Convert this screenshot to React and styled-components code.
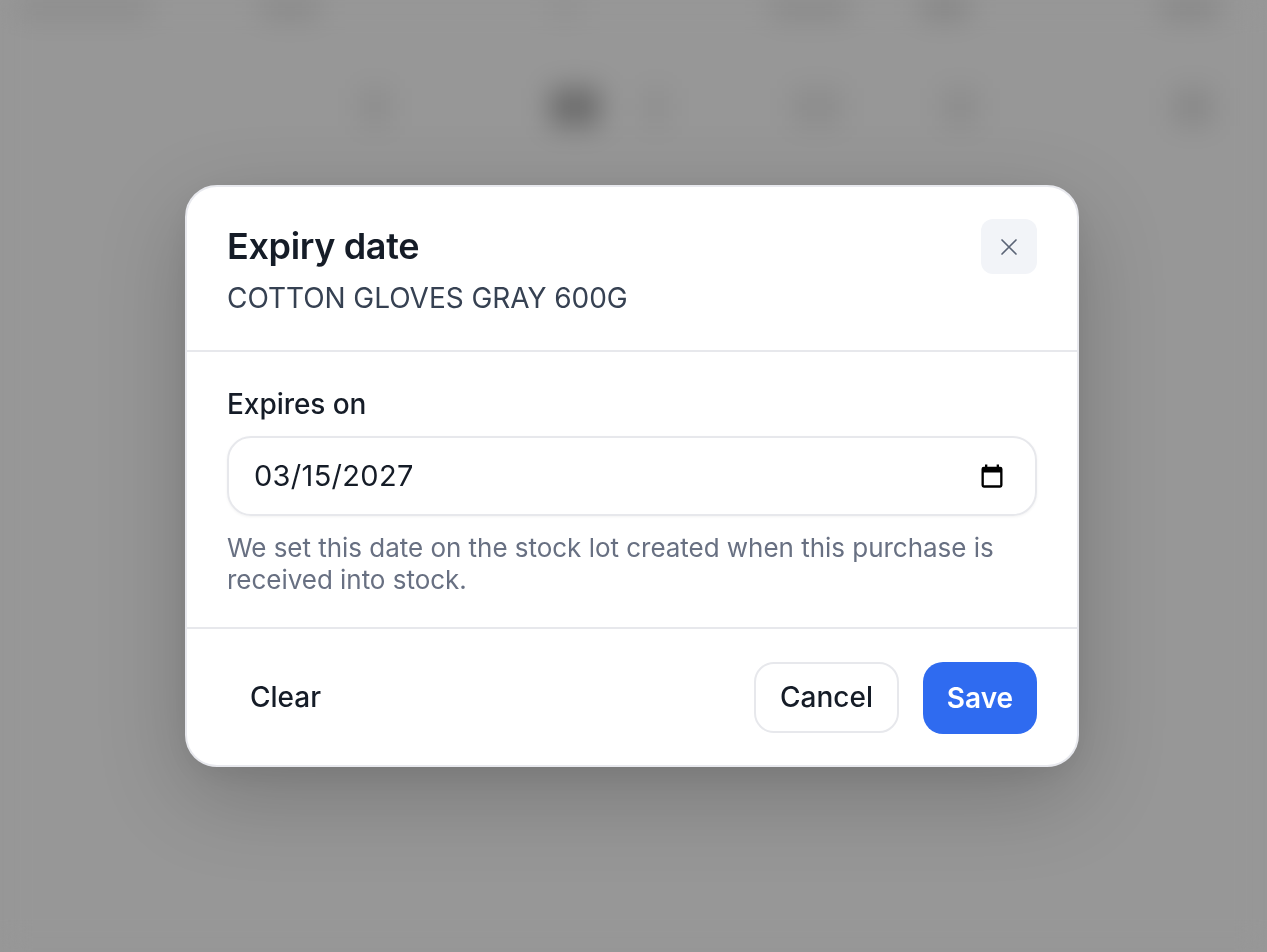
import React from 'react'
import styled, { createGlobalStyle } from 'styled-components'

const GlobalStyle = createGlobalStyle`
  html, body { margin: 0; padding: 0; height: 100%; }
  body { background: #979797; font-family: Inter, "Liberation Sans", sans-serif; overflow: hidden; }
`

const topBlobs = [
  { x: 20, w: 130, o: 0.12 }, { x: 110, w: 60, o: 0.16 }, { x: 230, w: 30, o: 0.08 }, { x: 190, w: 80, o: 0.16 }, { x: 70, w: 50, o: 0.22 }, { x: 190, w: 60, o: 0.2 },
]
const rowBlobs = [
  { x: 360, w: 30, o: 0.1 }, { x: 160, w: 50, o: 0.44 }, { x: 45, w: 22, o: 0.1 }, { x: 125, w: 50, o: 0.1 }, { x: 100, w: 36, o: 0.1 }, { x: 195, w: 40, o: 0.14 },
]

function App() {
  return (
    <>
      <GlobalStyle />
      <Page>
        <TopBar>
          {topBlobs.map((b, i) => <Blob key={i} $x={b.x} $w={b.w} $o={b.o} />)}
        </TopBar>
        <TableRow>
          {rowBlobs.map((b, i) => <RowBlob key={i} $x={b.x} $w={b.w} $o={b.o} />)}
        </TableRow>
      </Page>
      <Overlay>
        <Modal>
          <Header>
            <HeaderText>
              <Title>Expiry date</Title>
              <Subtitle>COTTON GLOVES GRAY 600G</Subtitle>
            </HeaderText>
            <CloseButton aria-label="Close">
              <svg width="20" height="20" viewBox="0 0 20 20" fill="none" stroke="#5b6476" strokeWidth="1.7" strokeLinecap="round">
                <path d="M3 3 17 17M17 3 3 17" />
              </svg>
            </CloseButton>
          </Header>
          <Body>
            <Label>Expires on</Label>
            <DateField>
              <DateText>03/15/2027</DateText>
              <svg width="28" height="28" viewBox="0 0 24 24" fill="#000">
                <path d="M19 4h-1V2.2h-2V4H8V2.2H6V4H5a2 2 0 0 0-2 2v14a2 2 0 0 0 2 2h14a2 2 0 0 0 2-2V6a2 2 0 0 0-2-2zm0 16H5V9h14v11z" />
              </svg>
            </DateField>
            <Help>We set this date on the stock lot created when this purchase is received into stock.</Help>
          </Body>
          <Footer>
            <ClearButton>Clear</ClearButton>
            <Actions>
              <CancelButton>Cancel</CancelButton>
              <SaveButton>Save</SaveButton>
            </Actions>
          </Footer>
        </Modal>
      </Overlay>
    </>
  )
}

export default App

const Page = styled.div`
  height: 952px;
  background: #979797;
  overflow: hidden;
  filter: blur(14px);
`

const TopBar = styled.div`
  display: flex;
  height: 85px;
`

const Blob = styled.div`
  flex: none;
  height: 18px;
  background: #333;
  margin-left: ${p => p.$x}px;
  width: ${p => p.$w}px;
  opacity: ${p => p.$o};
`

const TableRow = styled.div`
  display: flex;
  align-items: center;
  height: 44px;
`

const RowBlob = styled.div`
  flex: none;
  height: 38px;
  background: #333;
  margin-left: ${p => p.$x}px;
  width: ${p => p.$w}px;
  opacity: ${p => p.$o};
`

const Overlay = styled.div`
  position: fixed;
  inset: 0;
  display: flex;
  align-items: center;
  justify-content: center;
  padding-right: 3px;
`

const Modal = styled.div`
  box-sizing: border-box;
  width: 894px;
  height: 582px;
  background: #fff;
  border: 2px solid #e8e9ee;
  border-radius: 32px;
  box-shadow: 0 28px 90px rgba(0, 0, 0, 0.2), 0 8px 30px rgba(0, 0, 0, 0.06);
  display: flex;
  flex-direction: column;
`

const Header = styled.div`
  display: flex;
  justify-content: space-between;
  align-items: flex-start;
  height: 165px;
  box-sizing: border-box;
  padding: 32px 40px 0;
  border-bottom: 2px solid #e7e8ec;
`

const HeaderText = styled.div`
  padding-top: 3px;
`

const Title = styled.div`
  font-size: 36px;
  font-weight: 600;
  line-height: 48px;
  color: #151c27;
  letter-spacing: -0.36px;
`

const Subtitle = styled.div`
  font-size: 28px;
  line-height: 40px;
  margin-top: 8px;
  letter-spacing: -0.05px;
  color: #364152;
`

const CloseButton = styled.button`
  width: 56px;
  height: 55px;
  border: 0;
  border-radius: 12px;
  background: #f2f4f8;
  display: flex;
  align-items: center;
  justify-content: center;
  padding: 0;
`

const Body = styled.div`
  height: 277px;
  box-sizing: border-box;
  padding: 32px 40px 0;
  border-bottom: 2px solid #e7e8ec;
`

const Label = styled.div`
  font-size: 28px;
  font-weight: 500;
  line-height: 40px;
  letter-spacing: -0.05px;
  color: #151c27;
`

const DateField = styled.div`
  box-sizing: border-box;
  margin-top: 12px;
  height: 80px;
  border: 2px solid #e7e8ec;
  border-radius: 24px;
  box-shadow: 0 1px 3px rgba(0, 0, 0, 0.05);
  display: flex;
  align-items: center;
  justify-content: space-between;
  padding: 0 29px 0 25px;
`

const DateText = styled.span`
  font-size: 29px;
  color: #151c27;
  letter-spacing: 0.3px;
  position: relative;
  top: -1px;
`

const Help = styled.div`
  margin-top: 16px;
  font-size: 26px;
  line-height: 32px;
  letter-spacing: -0.03px;
  color: #687082;
`

const Footer = styled.div`
  flex: 1;
  display: flex;
  align-items: center;
  justify-content: space-between;
  padding: 1px 40px 0;
`

const Actions = styled.div`
  display: flex;
  align-items: flex-start;
  gap: 24px;
`

const ClearButton = styled.button`
  font: 500 28px Inter, "Liberation Sans", sans-serif;
  color: #151c27;
  background: none;
  border: 0;
  padding: 0 23px;
  height: 70px;
  margin-bottom: 2px;
`

const CancelButton = styled.button`
  box-sizing: border-box;
  font: 500 28px Inter, "Liberation Sans", sans-serif;
  color: #151c27;
  background: #fff;
  border: 2px solid #e7e8ec;
  border-radius: 20px;
  width: 145px;
  height: 71px;
  padding: 0;
`

const SaveButton = styled.button`
  box-sizing: border-box;
  font: 600 28px Inter, "Liberation Sans", sans-serif;
  color: #fff;
  background: #2f6bf0;
  border: 0;
  border-radius: 20px;
  width: 114px;
  height: 72px;
  padding: 0;
`
